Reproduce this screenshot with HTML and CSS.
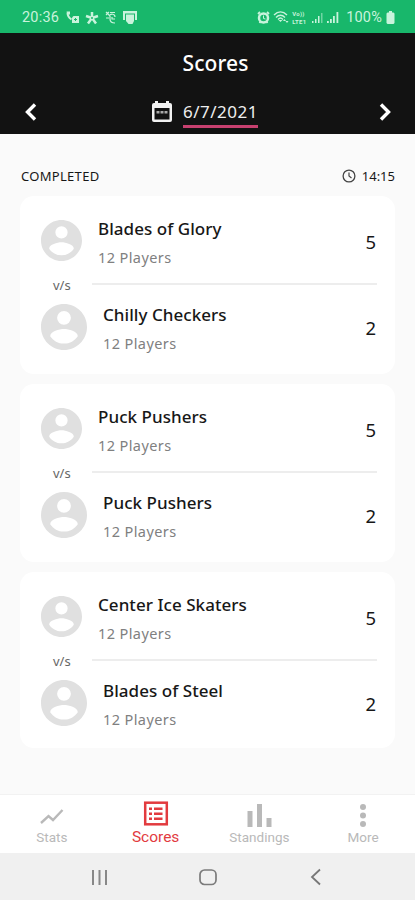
FILE: index.html
```html
<!DOCTYPE html>
<html lang="en">
<head>
    <meta charset="UTF-8">
    <meta name="viewport" content="width=device-width, initial-scale=1.0">
    <title>Scores</title>
    <link rel="stylesheet" href="styles.css">
</head>
<body>
    <svg class="symbols">
        <symbol id="person" viewBox="2 2 20 20">
            <path d="M12 2C6.48 2 2 6.48 2 12s4.48 10 10 10 10-4.48 10-10S17.52 2 12 2zm0 3a3 3 0 1 1 0 6 3 3 0 0 1 0-6zm0 14.2c-2.5 0-4.71-1.28-6-3.22.03-1.99 4-3.08 6-3.08s5.97 1.09 6 3.08c-1.29 1.94-3.5 3.22-6 3.22z"/>
        </symbol>
    </svg>

    <div class="status-bar">
        <div class="status-left">
            <span class="clock">20:36</span>
            <svg width="13" height="13" viewBox="0 0 13 13"><path d="M1.500 1.500c0 3 1 5 4 7" fill="none" stroke="currentColor" stroke-width="2"/><path d="M.5.5H4v3H2z"/><path d="M6 6.500l1.500-1.500H13v7H6z"/><path d="M8 8.500h3M9.500 7v3" stroke="#18b76b"/></svg>
            <svg width="14" height="14" viewBox="0 0 14 14"><path d="M7 7V1M7 7L1 5M7 7l6-2M7 7l-4 5.500M7 7l4 5.500" stroke="currentColor" stroke-width="2.500"/><circle cx="7" cy="7" r="1" fill="#18b76b"/></svg>
            <svg width="12" height="13" viewBox="0 0 12 13"><path d="M1 1l3 3M4 1L1 4M1 7h3M5 1.500h5M4 5c2-3 6-2 6 1M5 5v3c0 3 2 4 5 4M7 6v2h3" fill="none" stroke="currentColor" stroke-width="1.200"/></svg>
            <svg width="14" height="13" viewBox="0 0 14 13"><path d="M0 0h14v9h-2V2.500H2V9H0z"/><path d="M3 3.500h8V10l-1.500 3h-4L3 10z"/></svg>
        </div>
        <div class="status-right">
            <svg width="13" height="13" viewBox="0 0 13 13"><circle cx="6.500" cy="7" r="4.500" fill="none" stroke="currentColor" stroke-width="2.500"/><path d="M1 3l2-2M12 3l-2-2M2.500 12l1-1.500M10.500 12l-1-1.500" stroke="currentColor" stroke-width="1.800"/><path d="M6.500 4.500v3l2 .5" fill="none" stroke="currentColor"/></svg>
            <svg width="16" height="13" viewBox="0 0 16 13"><path d="M1 4c4-4 9-4 13 0M3 6.500c3-3 6-3 9 0M5 8.500c2-2 3-2 5 0" fill="none" stroke="currentColor" stroke-width="1.400"/><path d="M5.500 9h4l-2 2zM10 10l1.500-2 1.500 2zM12.500 10h3L14 12z"/></svg>
            <span class="lte"><span>Vo))</span><span>LTE1</span></span>
            <svg width="12" height="13" viewBox="0 0 12 13"><path d="M1 10h1.500v2H1zM4 8h1.500v4H4zM7 5h1.500v7H7z"/><path d="M10 2h1.500v10H10z" opacity=".5"/></svg>
            <svg width="13" height="13" viewBox="0 0 13 13"><path d="M1 10h1.800v2H1zM4 8h1.800v4H4zM7 5h1.800v7H7zM10.500 1h1.800v11h-1.800z"/></svg>
            <span class="battery-level">100%</span>
            <svg width="9" height="13" viewBox="0 0 9 13"><path d="M3 0h3v1.500h1.500l1 1V12l-1 1h-6l-1-1V2.500l1-1H3z"/></svg>
        </div>
    </div>

    <header class="header">
        <h1>Scores</h1>
        <div class="date-bar">
            <svg width="14" height="20" viewBox="0 0 14 20"><path d="M11 2.500L3.500 10l7.500 7.500" fill="none" stroke="#fff" stroke-width="3.400"/></svg>
            <div class="date">
                <svg width="22" height="22" viewBox="0 0 22 22"><path d="M3 2h1V0h3v2h8V0h3v2h1a2 2 0 0 1 2 2v15a2 2 0 0 1-2 2H3a2 2 0 0 1-2-2V4a2 2 0 0 1 2-2zm.5 5v11.500h15V7z" fill="#f2f2f2" fill-rule="evenodd"/><path d="M5.500 10h3v2.500h-3zM9.500 10h3v2.500h-3zM13.500 10h3v2.500h-3z" fill="#aaa"/></svg>
                <span class="date-value">6/7/2021</span>
            </div>
            <svg width="14" height="20" viewBox="0 0 14 20"><path d="M3 2.500l7.500 7.500L3 17.500" fill="none" stroke="#fff" stroke-width="3.400"/></svg>
        </div>
    </header>

    <main class="content">
        <div class="section-title">
            <span class="completed">COMPLETED</span>
            <span class="time">
                <svg width="14" height="14" viewBox="0 0 14 14"><path d="M7 3.500V7l2.500 2" fill="none" stroke="#444" stroke-width="1.200"/><circle cx="7" cy="7" r="5.900" fill="none" stroke="#444" stroke-width="1.300"/></svg>
                <span>14:15</span>
            </span>
        </div>

        <div class="card">
            <div class="team home">
                <svg class="avatar"><use href="#person"/></svg>
                <div class="team-info">
                    <div class="team-name">Blades of Glory</div>
                    <div class="players">12 Players</div>
                </div>
                <div class="score">5</div>
            </div>
            <div class="versus"><span>v/s</span><hr></div>
            <div class="team away">
                <svg class="avatar"><use href="#person"/></svg>
                <div class="team-info">
                    <div class="team-name">Chilly Checkers</div>
                    <div class="players">12 Players</div>
                </div>
                <div class="score">2</div>
            </div>
        </div>

        <div class="card">
            <div class="team home">
                <svg class="avatar"><use href="#person"/></svg>
                <div class="team-info">
                    <div class="team-name">Puck Pushers</div>
                    <div class="players">12 Players</div>
                </div>
                <div class="score">5</div>
            </div>
            <div class="versus"><span>v/s</span><hr></div>
            <div class="team away">
                <svg class="avatar"><use href="#person"/></svg>
                <div class="team-info">
                    <div class="team-name">Puck Pushers</div>
                    <div class="players">12 Players</div>
                </div>
                <div class="score">2</div>
            </div>
        </div>

        <div class="card">
            <div class="team home">
                <svg class="avatar"><use href="#person"/></svg>
                <div class="team-info">
                    <div class="team-name">Center Ice Skaters</div>
                    <div class="players">12 Players</div>
                </div>
                <div class="score">5</div>
            </div>
            <div class="versus"><span>v/s</span><hr></div>
            <div class="team away">
                <svg class="avatar"><use href="#person"/></svg>
                <div class="team-info">
                    <div class="team-name">Blades of Steel</div>
                    <div class="players">12 Players</div>
                </div>
                <div class="score">2</div>
            </div>
        </div>
    </main>

    <nav class="tabs">
        <div class="tab">
            <svg width="26" height="26" viewBox="0 0 26 26"><path d="M2 22l7.500-7 4.500 4 9.500-10" fill="none" stroke="currentColor" stroke-width="2.400"/></svg>
            <span>Stats</span>
        </div>
        <div class="tab active">
            <svg width="26" height="26" viewBox="0 0 26 26"><rect x="2.200" y="1.700" width="21.600" height="21.600" fill="none" stroke="currentColor" stroke-width="2.500"/><path d="M6 6.500h3V9H6zM11 6.500h8.500V9H11zM6 11.500h3V14H6zM11 11.500h8.500V14H11zM6 16.500h3V19H6zM11 16.500h8.500V19H11z"/></svg>
            <span>Scores</span>
        </div>
        <div class="tab">
            <svg width="26" height="26" viewBox="0 0 26 26"><path d="M1.500 10h5v16h-5zM11 3h5v23h-5zM20.500 17h5v9h-5z"/></svg>
            <span>Standings</span>
        </div>
        <div class="tab">
            <svg width="26" height="26" viewBox="0 0 26 26"><circle cx="13" cy="6" r="3"/><circle cx="13" cy="14.500" r="3"/><circle cx="13" cy="23" r="3"/></svg>
            <span>More</span>
        </div>
    </nav>

    <div class="system-bar">
        <svg width="18" height="18" viewBox="0 0 18 18"><path d="M2 2v15M8.500 2v15M15 2v15" stroke="#888" stroke-width="2"/></svg>
        <svg width="18" height="18" viewBox="0 0 18 18"><rect x="1" y="2" width="16" height="14.500" rx="4.500" fill="none" stroke="#7b7b7b" stroke-width="1.700"/></svg>
        <svg width="18" height="18" viewBox="0 0 18 18"><path d="M13 1.500L5 9l8 7.500" fill="none" stroke="#777" stroke-width="1.800"/></svg>
    </div>
</body>
</html>
```

FILE: styles.css
```css
* {
    box-sizing: border-box;
}
body {
    margin: 0;
    height: 900px;
    display: flex;
    flex-direction: column;
    background-color: #fafafa;
    color: #171717;
    font-family: "Noto Sans", sans-serif;
    overflow: hidden;
}
svg {
    display: block;
    flex-shrink: 0;
    fill: currentColor;
}
.symbols {
    display: none;
}
.status-bar {
    height: 33px;
    flex-shrink: 0;
    display: flex;
    justify-content: space-between;
    align-items: center;
    padding: 2px 20px 0 22px;
    background-color: #18b76b;
    color: #c9f3dc;
    font-family: Roboto, sans-serif;
    font-size: 14.5px;
}
.status-left, .status-right {
    display: flex;
    align-items: center;
}
.status-left {
    gap: 6px;
}
.clock {
    width: 38px;
    letter-spacing: 0.2px;
}
.status-right {
    gap: 3px;
}
.lte {
    display: flex;
    flex-direction: column;
    width: 16px;
    font-size: 6px;
    font-weight: bold;
    line-height: 8px;
    letter-spacing: 0.3px;
}
.battery-level {
    margin: 0 1px 0 4px;
    letter-spacing: 0.2px;
}
.header {
    height: 101px;
    flex-shrink: 0;
    background-color: #121212;
    color: #fff;
}
h1 {
    margin: 0;
    padding: 15px 0 0 16px;
    font-size: 21px;
    font-weight: 500;
    line-height: 30px;
    letter-spacing: 0.1px;
    text-align: center;
}
.date-bar {
    display: flex;
    justify-content: space-between;
    align-items: center;
    height: 48px;
    margin-top: 10px;
    padding: 0 23px 0 24px;
}
.date {
    display: flex;
    align-items: center;
    gap: 10px;
    margin-right: 7px;
}
.date-value {
    height: 30px;
    margin-top: 1px;
    border-bottom: 3px solid #c7406f;
    font-size: 17px;
    line-height: 28px;
    letter-spacing: 0.5px;
    color: #eee;
}
.content {
    flex: 1;
    padding: 32px 20px 0;
}
.section-title {
    display: flex;
    justify-content: space-between;
    height: 30px;
    font-size: 13px;
    line-height: 20px;
}
.completed {
    padding-left: 1px;
    letter-spacing: 0.3px;
}
.time {
    display: flex;
    align-items: center;
    gap: 6px;
    height: 20px;
}
.card {
    height: 178px;
    margin-bottom: 10px;
    padding: 19px 18px 0 21px;
    background-color: #fff;
    border-radius: 14px;
}
.card:last-child {
    height: 176px;
}
.team {
    display: flex;
    align-items: flex-start;
    height: 56px;
}
.avatar {
    width: 41px;
    height: 41px;
    margin-top: 5px;
    color: #e0e0e0;
}
.away .avatar {
    width: 46px;
    height: 46px;
    margin-top: 3px;
}
.team-info {
    flex: 1;
    padding-left: 16px;
}
.team-name {
    font-size: 17px;
    font-weight: 500;
    line-height: 28px;
    letter-spacing: 0.05px;
}
.players {
    font-size: 14.5px;
    line-height: 28px;
    letter-spacing: 0.4px;
    color: #808080;
}
.score {
    padding-right: 1px;
    font-size: 18.5px;
    line-height: 53px;
}
.versus {
    display: flex;
    align-items: center;
    height: 28px;
    margin-bottom: 2px;
    font-size: 13px;
    color: #666;
}
.versus span {
    width: 51px;
    padding-left: 12px;
}
.versus hr {
    flex: 1;
    height: 2px;
    margin: 0 0 2px 0;
    border: none;
    background-color: #ededed;
}
.tabs {
    display: flex;
    height: 59px;
    flex-shrink: 0;
    border-top: 1px solid #f2f2f2;
    background-color: #fff;
    color: #b9b9b9;
    font-family: Roboto, sans-serif;
    font-size: 13.5px;
}
.tab {
    flex: 1;
    display: flex;
    flex-direction: column;
    align-items: center;
    padding-top: 6px;
    line-height: 21px;
}
.tab svg {
    overflow: visible;
}
.tab.active {
    color: #e23b3f;
    font-size: 15.5px;
}
.system-bar {
    display: flex;
    justify-content: space-between;
    align-items: center;
    height: 47px;
    flex-shrink: 0;
    padding: 0 90px 0 91px;
    background-color: #f0f0f0;
}
```
